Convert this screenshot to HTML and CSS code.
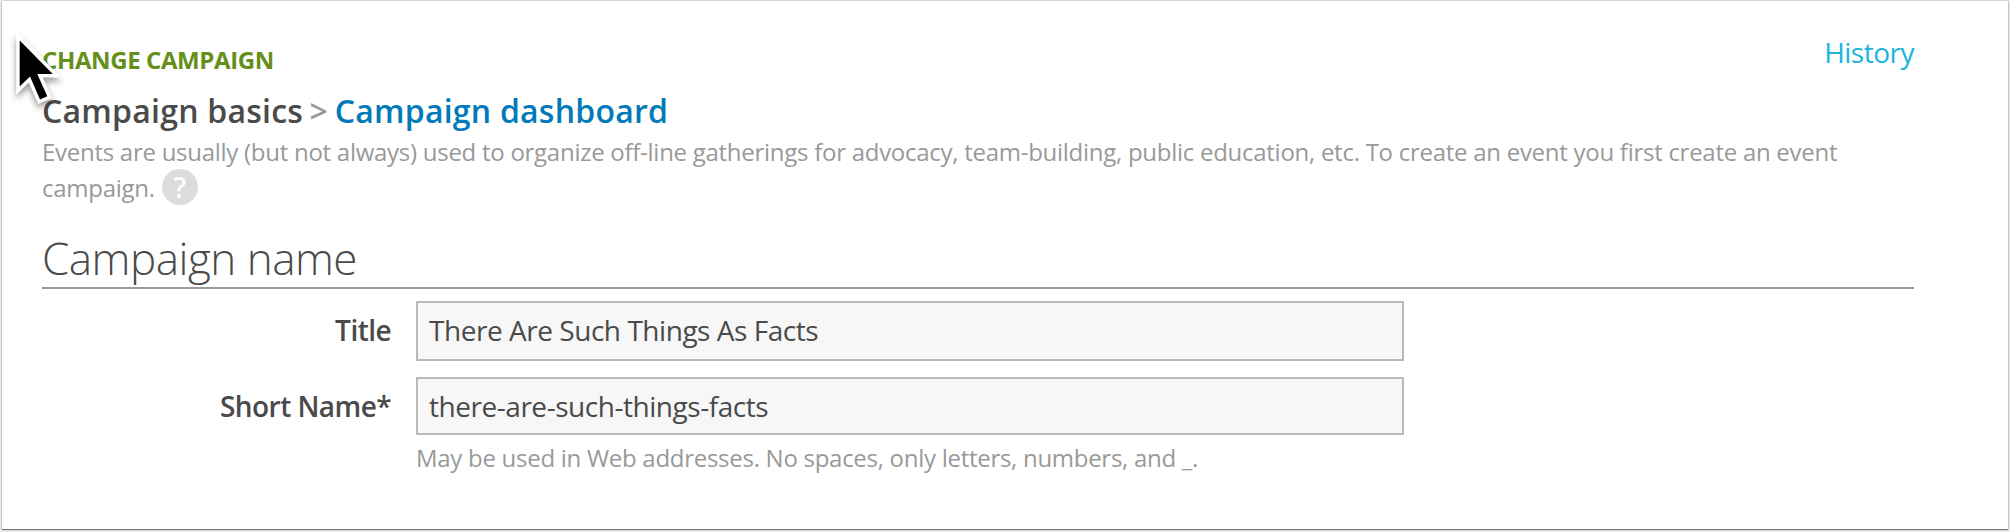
FILE: index.html
```
<!DOCTYPE html>
<html lang="en">
<head>
  <meta charset="utf-8">
  <title>Change campaign</title>
  <link rel="stylesheet" href="styles.css">
</head>
<body>
  <div class="panel">
    <header class="page-header">
      <div class="page-title">Change campaign</div>
      <a class="history">History</a>
    </header>

    <h1 class="breadcrumb">Campaign basics <span class="sep">&gt;</span> <a>Campaign dashboard</a></h1>
    <p class="intro">Events are usually (but not always) used to organize off-line gatherings for advocacy, team-building, public education, etc. To create an event you first create an event campaign. <span class="help">?</span></p>

    <h2 class="section-title">Campaign name</h2>
    <form class="fields">
      <label for="title">Title</label>
      <input id="title" type="text" value="There Are Such Things As Facts">
      <label for="name">Short Name*</label>
      <input id="name" class="short" type="text" value="there-are-such-things-facts">
      <div class="hint">May be used in Web addresses. No spaces, only letters, numbers, and _.</div>
    </form>

    <!-- Mouse pointer -->
    <svg class="pointer" viewBox="0 0 80 120" width="80" height="120">
      <path d="M19.7 40.5 V86.5 L30 76.5 L40 99.5 L47.3 96.3 L37.3 74 H52.8 Z" />
    </svg>
  </div>
</body>
</html>
```
FILE: styles.css
```
* {
  box-sizing: border-box;
}

body {
  margin: 0;
  padding: 1px 2px 3px;
  height: 532px;
  overflow: hidden;
  background: #efefef;
  font-family: "Open Sans", sans-serif;
  color: #4a4a4a;
}

.panel {
  position: relative;
  height: 528px;
  padding: 32px 94px 0 40px;
  background: #fff;
  box-shadow: 0 1px 1px #777, 0 0 2px #999;
}

.page-header {
  display: flex;
  justify-content: space-between;
  height: 55px;
}

.page-title {
  padding-top: 10px;
  font-size: 24px;
  line-height: 34px;
  font-weight: 700;
  letter-spacing: -0.39px;
  text-transform: uppercase;
  color: #64901a;
}

.history {
  font-size: 28px;
  line-height: 38px;
  letter-spacing: -0.5px;
  color: #19b5dc;
}

.breadcrumb {
  margin: 0;
  font-size: 32px;
  line-height: 45px;
  font-weight: 600;
  letter-spacing: 0.23px;
}

.breadcrumb a {
  color: #007ab8;
}

.sep {
  margin: 0 -2px;
  color: #999;
}

.intro {
  margin: 1px 0 0;
  font-size: 24px;
  line-height: 36px;
  letter-spacing: -0.27px;
  color: #999;
}

.help {
  display: inline-block;
  width: 36px;
  height: 36px;
  margin: -1px 0 0 1px;
  border-radius: 50%;
  background: #dcdcdb;
  color: #fff;
  font-size: 28px;
  font-weight: 600;
  text-align: center;
  vertical-align: top;
}

.section-title {
  margin: 24px 0 0;
  border-bottom: 2px solid #999;
  font-size: 44px;
  line-height: 57px;
  font-weight: 300;
  letter-spacing: -0.5px;
}

/* Form rows */
.fields {
  display: grid;
  grid-template-columns: 349px 988px;
  column-gap: 25px;
  padding-top: 12px;
}

label {
  font-size: 28px;
  line-height: 58px;
  font-weight: 600;
  letter-spacing: -0.55px;
  text-align: right;
}

input {
  height: 60px;
  margin: 0 0 16px;
  padding: 0 11px 2px;
  border: 2px solid #bababa;
  border-radius: 0;
  background: #f7f7f7;
  font: 28px "Open Sans", sans-serif;
  letter-spacing: -0.46px;
  color: #4a4a4a;
}

.short {
  height: 58px;
  margin-bottom: 5px;
  padding-bottom: 0;
}

.hint {
  grid-column: 2;
  font-size: 24px;
  line-height: 36px;
  letter-spacing: -0.28px;
  color: #999;
}

.pointer {
  position: absolute;
  top: -1px;
  left: -2px;
  filter: drop-shadow(0 4px 3px rgba(0, 0, 0, 0.4));
}

.pointer path {
  fill: #000;
  stroke: #fff;
  stroke-width: 7;
  paint-order: stroke;
}
```
